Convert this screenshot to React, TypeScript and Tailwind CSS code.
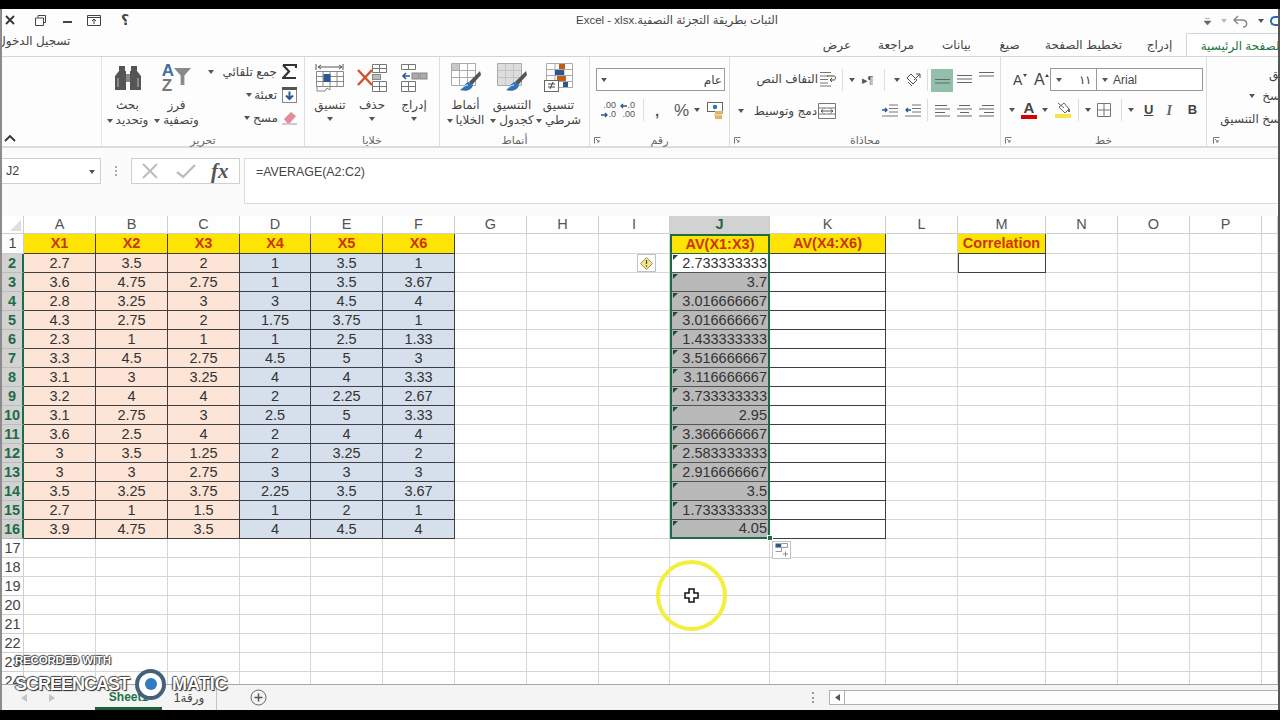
import type { ReactNode } from "react";

const AR = "font-['Liberation_Sans','DejaVu_Sans',sans-serif]";

const A = ["2.7","3.6","2.8","4.3","2.3","3.3","3.1","3.2","3.1","3.6","3","3","3.5","2.7","3.9"];
const B = ["3.5","4.75","3.25","2.75","1","4.5","3","4","2.75","2.5","3.5","3","3.25","1","4.75"];
const C = ["2","2.75","3","2","1","2.75","3.25","4","3","4","1.25","2.75","3.75","1.5","3.5"];
const D = ["1","1","3","1.75","1","4.5","4","2","2.5","2","2","3","2.25","1","4"];
const E = ["3.5","3.5","4.5","3.75","2.5","5","4","2.25","5","4","3.25","3","3.5","2","4.5"];
const F = ["1","3.67","4","1","1.33","3","3.33","2.67","3.33","4","2","3","3.67","1","4"];
const J = ["2.733333333","3.7","3.016666667","3.016666667","1.433333333","3.516666667","3.116666667","3.733333333","2.95","3.366666667","2.583333333","2.916666667","3.5","1.733333333","4.05"];
const LETTERS = ["A","B","C","D","E","F","G","H","I","J","K","L","M","N","O","P",""];
const ROWS = Array.from({ length: 24 }, (_, i) => i + 1);

function Caret({ className = "" }: { className?: string }) {
  return (
    <svg width="6" height="4" viewBox="0 0 6 4" className={"shrink-0 " + className}>
      <path d="M0 0h6L3 4z" fill="#555" />
    </svg>
  );
}

function Launcher({ className = "" }: { className?: string }) {
  return (
    <svg width="7" height="7" viewBox="0 0 7 7" className={className}>
      <path d="M.5 6.5v-6h6M2 2l3 3M5 3v2H3" fill="none" stroke="#777" />
    </svg>
  );
}

function Sep({ className = "" }: { className?: string }) {
  return <div className={"h-[22px] w-px shrink-0 bg-[#dcdcdc] " + className} />;
}

// big ribbon button: icon on top, two lines of label, caret somewhere
function Big({ w, icon, top, bottom, caretLine }: { w: string; icon: ReactNode; top: string; bottom?: string; caretLine?: boolean }) {
  return (
    <div className={"flex shrink-0 flex-col items-center text-[12px] leading-[15px] text-[#444] " + w}>
      <div className="flex h-[33px] items-center justify-center">{icon}</div>
      <div className="mt-[4px] whitespace-nowrap" dir="rtl">{top}</div>
      {caretLine ? (
        <div className="flex h-[15px] items-center whitespace-nowrap">
          <Caret className="mr-[3px]" />
          <span dir="rtl">{bottom}</span>
        </div>
      ) : (
        <div className="mt-[4px]"><Caret /></div>
      )}
    </div>
  );
}

function Group({ w, label, launcher, children }: { w: string; label: string; launcher?: boolean; children: ReactNode }) {
  return (
    <div className={"flex h-[90px] shrink-0 flex-col overflow-hidden border-r border-[#dedede] " + w}>
      <div className="flex h-[76px] pt-[4px]">{children}</div>
      <div className="flex h-[14px] items-center text-[11px] text-[#666]">
        {launcher && <Launcher className="ml-[4px]" />}
        <span className="flex-1 text-center" dir="rtl">{label}</span>
        {launcher && <span className="w-[11px]" />}
      </div>
    </div>
  );
}

function Binoculars() {
  return (
    <svg width="28" height="26" viewBox="0 0 28 26">
      <path d="M5 1h6v5h1v19H1V11l4-5zM23 1h-6v5h-1v19h11V11l-4-5z" fill="#555" />
      <rect x="12" y="9" width="4" height="8" fill="#888" />
      <rect x="3" y="13" width="2" height="9" fill="#888" />
      <rect x="23" y="13" width="2" height="9" fill="#888" />
    </svg>
  );
}

function SortIcon() {
  return (
    <div className="flex h-[30px] items-start font-['Liberation_Sans',sans-serif] text-[17px] font-bold leading-[15px]">
      <div className="flex flex-col">
        <span className="text-[#41719c]">A</span>
        <span className="text-[#777]">Z</span>
      </div>
      <svg width="17" height="17" viewBox="0 0 18 18" className="mt-[5px]">
        <path d="M0 0h18l-7 8v10h-4V8z" fill="#8a8a8a" />
      </svg>
    </div>
  );
}

function Sigma() {
  return (
    <svg width="15" height="15" viewBox="0 0 15 15">
      <path d="M1 1h13v3M14 14H1l6-6.5L1 1" fill="none" stroke="#333" strokeWidth="2.2" />
    </svg>
  );
}

function FillIcon() {
  return (
    <svg width="15" height="16" viewBox="0 0 15 16">
      <rect x=".5" y=".5" width="14" height="15" fill="#fff" stroke="#888" />
      <rect width="15" height="3" fill="#555" />
      <path d="M7.5 4.5v7M4 8.5l3.5 3.5L11 8.5" fill="none" stroke="#2b5797" strokeWidth="2" />
    </svg>
  );
}

function Eraser() {
  return (
    <svg width="15" height="14" viewBox="0 0 15 14">
      <path d="M2 8l7-7 5 4-6 7H5z" fill="#e58b98" />
      <path d="M0 13h15" stroke="#999" />
    </svg>
  );
}

function FormatIcon() {
  return (
    <svg width="30" height="31" viewBox="0 0 30 31">
      <path d="M1 2v6M28 2v6M3 5h24M3 5l3-2M3 5l3 2M27 5l-3-2M27 5l-3 2" fill="none" stroke="#555" />
      <path d="M1.5 9.5h27v15h-27zM8 9.5v15M15 9.5v15M22 9.5v15M1.5 14.5h27M1.5 19.5h27" fill="#fff" stroke="#888" />
      <rect x="8.5" y="12" width="7" height="8" fill="#2b5797" />
      <path d="M2 25v4h8l2-3 3 2M15 25v3" fill="none" stroke="#888" />
    </svg>
  );
}

function DeleteIcon() {
  return (
    <svg width="30" height="30" viewBox="0 0 30 30">
      <path d="M15.5 1.5h14v8h-14zM22.5 1.5v8M15.5 5.5h14" fill="#fff" stroke="#777" />
      <rect x="15.5" y="11.5" width="8" height="5" fill="#bbb" stroke="#888" />
      <path d="M15.5 18.5h14v10h-14zM22.5 18.5v10M15.5 23.5h14" fill="#fff" stroke="#777" />
      <path d="M1 7l14 15M15 7L1 22" stroke="#d2532a" strokeWidth="2.4" />
    </svg>
  );
}

function InsertIcon() {
  return (
    <svg width="27" height="30" viewBox="0 0 27 30">
      <path d="M.5 1.5h14v5H.5zM7.5 1.5v5M.5 18.5h14v10H.5zM7.5 18.5v10M.5 23.5h14" fill="#fff" stroke="#777" />
      <rect x="11" y="10" width="7" height="6" fill="#aaa" stroke="#888" />
      <rect x="19" y="10" width="7" height="6" fill="#aaa" stroke="#888" />
      <path d="M9 13H2M5 10l-3 3 3 3" fill="none" stroke="#2b5797" strokeWidth="1.6" />
    </svg>
  );
}

function CondIcon() {
  return (
    <svg width="30" height="31" viewBox="0 0 30 31">
      <path d="M2.5 1.5h26v24h-26zM11 1.5v24M20 1.5v24M2.5 7.5h26M2.5 13.5h26M2.5 19.5h26" fill="#fff" stroke="#aaa" />
      <rect x="15" y="2" width="6" height="5" fill="#c55a11" />
      <rect x="11" y="8" width="9" height="5" fill="#2b5797" />
      <rect x="13" y="14" width="9" height="5" fill="#c55a11" />
      <rect x="19" y="20" width="5" height="5" fill="#2b5797" />
      <rect x=".5" y="18.5" width="14" height="11" fill="#fff" stroke="#666" />
      <path d="M4 22h7M4 25h7M9 20l-3 7" stroke="#444" fill="none" />
    </svg>
  );
}

function BrushTable({ cells }: { cells: ReactNode }) {
  return (
    <svg width="30" height="31" viewBox="0 0 30 31">
      <path d="M.5 1.5h24v22H.5zM8.5 1.5v22M16.5 1.5v22M.5 8.5h24M.5 15.5h24" fill="#fff" stroke="#aaa" />
      {cells}
      <path d="M29 9l-11 11 3 3 9-10z" fill="#555" />
      <path d="M18 20c-5 1-4 5-9 8 6 2 12 0 13-5z" fill="#2e75b6" />
      <path d="M12 25c2-1 3-2 5-2" stroke="#fff" fill="none" />
    </svg>
  );
}

function WrapIcon() {
  return (
    <svg width="17" height="16" viewBox="0 0 17 16">
      <path d="M1 1.5h11M1 5h8M1 8.5h8M1 12h8M1 15h11" stroke="#777" fill="none" />
      <path d="M8 5h7c2 0 2 4 0 4h-4M13 7l-2 2 2 2" stroke="#444" fill="none" />
    </svg>
  );
}

function MergeIcon() {
  return (
    <svg width="18" height="16" viewBox="0 0 18 16">
      <path d="M.5.5h17v15H.5zM.5 5h17M.5 11h17M6 5v1M12 5v1M6 10v1M12 10v1" fill="#fff" stroke="#777" />
      <path d="M3 8h12M5 6.5L3 8l2 1.5M13 6.5L15 8l-2 1.5" stroke="#555" fill="none" />
    </svg>
  );
}

function Lines({ kind }: { kind: "r" | "c" | "l" }) {
  const d = kind === "r"
    ? "M3 2.5h12M0 6h15M5 9.5h10M0 13h15"
    : kind === "c"
      ? "M2 2.5h11M0 6h15M3 9.5h9M0 13h15"
      : "M0 2.5h12M0 6h15M0 9.5h10M0 13h15";
  return (
    <svg width="15" height="15" viewBox="0 0 15 15">
      <path d={d} stroke="#666" fill="none" />
    </svg>
  );
}

function VLines({ n }: { n: number }) {
  return (
    <svg width="15" height="12" viewBox="0 0 15 12">
      {Array.from({ length: n }, (_, i) => (
        <path key={i} d={`M0 ${i * 3.5 + 1.5}h15`} stroke="#666" />
      ))}
    </svg>
  );
}

function Indent({ flip }: { flip?: boolean }) {
  return (
    <svg width="16" height="13" viewBox="0 0 16 13">
      <path d="M7 1h9M7 4.5h9M7 8h9M0 12h16" stroke="#777" fill="none" />
      <path d={flip ? "M6 6H1M3 4L1 6l2 2" : "M0 6h5M3 4l2 2-2 2"} stroke="#2b5797" strokeWidth="1.4" fill="none" />
    </svg>
  );
}

function Accounting() {
  return (
    <svg width="17" height="17" viewBox="0 0 17 17">
      <rect x=".5" y=".5" width="15" height="9" fill="#fff" stroke="#666" />
      <circle cx="8" cy="5" r="2.2" fill="#2e75b6" />
      <rect x="8" y="9" width="8" height="3" fill="#e3b26a" />
      <rect x="7" y="12" width="8" height="2" fill="#eecb98" />
      <rect x="8" y="14" width="7" height="3" fill="#e3b26a" />
    </svg>
  );
}

function Arrow({ left }: { left?: boolean }) {
  return (
    <svg width="7" height="6" viewBox="0 0 7 6" className="shrink-0">
      <path d={left ? "M7 3H1M3 1L1 3l2 2" : "M0 3h6M4 1l2 2-2 2"} stroke="#2b5797" strokeWidth="1.3" fill="none" />
    </svg>
  );
}

function Decimals({ grow }: { grow?: boolean }) {
  return (
    <div className="flex h-[18px] w-[15px] shrink-0 flex-col items-end font-['Liberation_Sans',sans-serif] text-[9px] leading-[9px] text-[#555]">
      {grow ? (
        <>
          <span>.00</span>
          <span className="flex items-center"><Arrow />.0</span>
        </>
      ) : (
        <>
          <span className="flex items-center"><Arrow left />.0</span>
          <span>.00</span>
        </>
      )}
    </div>
  );
}

function SmallCaret({ up }: { up?: boolean }) {
  return (
    <svg width="4" height="3" viewBox="0 0 4 3" className="mb-[9px] shrink-0">
      <path d={up ? "M0 3h4L2 0z" : "M0 0h4L2 3z"} fill="#444" />
    </svg>
  );
}

function Ribbon() {
  return (
    <div className="flex h-[91px] shrink-0 border-b-2 border-[#dcdcdc] bg-[#fdfdfd]">
      <div className="flex w-[100px] shrink-0 flex-col justify-end border-r border-[#e4e4e4] pb-[4px] pl-[2px]">
        <svg width="12" height="7" viewBox="0 0 12 7"><path d="M1 6l5-5 5 5" fill="none" stroke="#333" strokeWidth="1.8" /></svg>
      </div>

      <Group w="w-[203px]" label="تحرير">
        <Big w="w-[51px]" icon={<Binoculars />} top="بحث" bottom="وتحديد" caretLine />
        <Big w="w-[47px]" icon={<SortIcon />} top="فرز" bottom="وتصفية" caretLine />
        <div className="flex flex-1 flex-col pr-[7px] text-[12px] text-[#444]">
          <div className="flex h-[21px] items-center justify-end">
            <Caret className="mr-[9px]" />
            <span dir="rtl" className="mr-[5px]">جمع تلقائي</span>
            <Sigma />
          </div>
          <div className="mt-[2px] flex h-[21px] items-center justify-end">
            <Caret className="mr-[2px]" />
            <span dir="rtl" className="mr-[5px]">تعبئة</span>
            <FillIcon />
          </div>
          <div className="mt-[2px] flex h-[21px] items-center justify-end">
            <Caret className="mr-[3px]" />
            <span dir="rtl" className="mr-[4px]">مسح</span>
            <Eraser />
          </div>
        </div>
      </Group>

      <Group w="w-[135px]" label="خلايا">
        <div className="w-[4px]" />
        <Big w="w-[42px]" icon={<FormatIcon />} top="تنسيق" />
        <Big w="w-[42px]" icon={<DeleteIcon />} top="حذف" />
        <Big w="w-[42px]" icon={<InsertIcon />} top="إدراج" />
      </Group>

      <Group w="w-[150px]" label="أنماط">
        <div className="w-[2px]" />
        <Big w="w-[47px]" icon={<BrushTable cells={<rect x="1" y="2" width="7" height="6" fill="#c9c9c9" />} />} top="أنماط" bottom="الخلايا" caretLine />
        <Big w="w-[46px]" icon={<BrushTable cells={<rect x="1" y="2" width="23" height="21" fill="#cfcfcf" opacity=".7" />} />} top="التنسيق" bottom="كجدول" caretLine />
        <Big w="w-[47px]" icon={<CondIcon />} top="تنسيق" bottom="شرطي" caretLine />
      </Group>

      <Group w="w-[140px]" label="رقم" launcher>
        <div className="flex w-full flex-col pl-[6px] pr-[4px] pt-[7px]">
          <div className="flex h-[23px] items-center justify-between border border-[#9a9a9a] bg-white pl-[4px] pr-[2px] text-[12px] text-[#444]">
            <Caret />
            <span dir="rtl">عام</span>
          </div>
          <div className="mt-[7px] flex h-[24px] items-center text-[#555]">
            <div className="ml-[5px]"><Decimals grow /></div>
            <div className="ml-[4px]"><Decimals /></div>
            <Sep className="ml-[8px]" />
            <span className="ml-[11px] w-[4px] font-['Liberation_Sans',sans-serif] text-[15px] font-bold leading-none">,</span>
            <span className="ml-[15px] w-[15px] font-['Liberation_Sans',sans-serif] text-[17px] leading-none">%</span>
            <Caret className="ml-[5px]" />
            <div className="ml-[7px]"><Accounting /></div>
          </div>
        </div>
      </Group>

      <Group w="w-[271px]" label="محاذاة" launcher>
        <div className="flex w-full pt-[7px] text-[12px] text-[#444]">
          <div className="flex w-[106px] flex-col pl-[8px]">
            <div className="flex h-[22px] items-center justify-end">
              <span dir="rtl" className="mr-[1px]">التفاف النص</span>
              <WrapIcon />
            </div>
            <div className="mt-[10px] flex h-[22px] items-center">
              <Caret />
              <span dir="rtl" className="ml-[8px] mr-[1px] flex-1 text-right">دمج وتوسيط</span>
              <MergeIcon />
            </div>
          </div>
          <div className="flex flex-1 flex-col">
            <div className="flex h-[24px] items-center">
              <Sep className="ml-[6px]" />
              <Caret className="ml-[6px]" />
              <span className="ml-[7px] w-[14px] whitespace-nowrap text-[11px] leading-none text-[#555]">▸¶</span>
              <Sep className="ml-[8px]" />
              <Caret className="ml-[9px]" />
              <svg width="16" height="16" viewBox="0 0 16 16" className="ml-[5px] shrink-0">
                <path d="M2 6l4-4 6 6-4 4zM3 10l4 4M11 2h4v4M15 2L9 8" fill="none" stroke="#555" />
              </svg>
              <Sep className="ml-[6px]" />
              <div className="ml-[3px] flex h-[23px] w-[22px] items-end justify-center bg-[#92bfa9] pb-[2px]"><VLines n={2} /></div>
              <div className="ml-[4px]"><VLines n={3} /></div>
              <div className="mb-[6px] ml-[7px]"><VLines n={2} /></div>
            </div>
            <div className="mt-[6px] flex h-[24px] items-center">
              <div className="ml-[46px]"><Indent /></div>
              <div className="ml-[7px]"><Indent flip /></div>
              <Sep className="ml-[6px]" />
              <div className="ml-[7px]"><Lines kind="l" /></div>
              <div className="ml-[7px]"><Lines kind="c" /></div>
              <div className="ml-[7px]"><Lines kind="r" /></div>
            </div>
          </div>
        </div>
      </Group>

      <Group w="w-[206px]" label="خط" launcher>
        <div className="flex w-full flex-col pt-[7px] font-['Liberation_Sans',sans-serif] text-[#444]">
          <div className="flex h-[23px] items-center">
            <span className="ml-[12px] w-[10px] text-[14px] leading-none">A</span>
            <SmallCaret />
            <span className="ml-[7px] w-[11px] text-[16px] leading-none">A</span>
            <SmallCaret up />
            <div className="ml-[1px] flex h-[23px] w-[47px] items-center justify-between border border-[#9a9a9a] bg-white px-[5px] text-[12px]">
              <Caret />
              <span>١١</span>
            </div>
            <div className="flex h-[23px] w-[106px] items-center border border-l-0 border-[#9a9a9a] bg-white pl-[5px] text-[12px]">
              <Caret />
              <span className="ml-[5px]">Arial</span>
            </div>
          </div>
          <div className="mt-[7px] flex h-[24px] items-center">
            <Caret className="ml-[8px]" />
            <div className="ml-[6px] flex w-[16px] flex-col items-center">
              <span className="text-[15px] font-bold leading-[14px]">A</span>
              <span className="h-[4px] w-[16px] bg-[#d90000]" />
            </div>
            <Caret className="ml-[5px]" />
            <div className="ml-[7px] flex w-[16px] flex-col items-center">
              <svg width="13" height="12" viewBox="0 0 13 12"><path d="M2 5l5-4 5 6-4 4zM1 1l6 5" fill="none" stroke="#666" /><path d="M12 7v3" stroke="#666" strokeWidth="2" /></svg>
              <span className="h-[4px] w-[16px] bg-[#f5e642]" />
            </div>
            <Sep className="ml-[7px]" />
            <Caret className="ml-[6px]" />
            <svg width="14" height="14" viewBox="0 0 14 14" className="ml-[6px]"><path d="M.5.5h13v13H.5zM7 .5v13M.5 7h13" fill="none" stroke="#777" /></svg>
            <Sep className="ml-[10px]" />
            <Caret className="ml-[6px]" />
            <span className="ml-[10px] text-[13px] font-bold underline">U</span>
            <span className="ml-[13px] font-['Liberation_Serif',serif] text-[14px] font-bold italic text-[#666]">I</span>
            <span className="ml-[16px] text-[13px] font-bold">B</span>
          </div>
        </div>
      </Group>

      <div className="flex h-[90px] flex-1 flex-col overflow-hidden text-[12px] text-[#444]">
        <div className="flex h-[76px] flex-col items-end pt-[8px]">
          <span dir="rtl" className="mr-[-15px] h-[20px] whitespace-nowrap">لصق</span>
          <div className="flex h-[22px] items-center">
            <Caret className="mr-[7px]" />
            <span dir="rtl" className="mr-[-6px] whitespace-nowrap">نسخ</span>
          </div>
          <span dir="rtl" className="mr-[-6px] mt-[3px] whitespace-nowrap">نسخ التنسيق</span>
        </div>
        <div className="flex h-[14px] items-center"><Launcher className="ml-[6px]" /></div>
      </div>
    </div>
  );
}

function TitleBar() {
  return (
    <div className="flex h-[24px] shrink-0 items-center bg-[#fdfdfd] text-[#444]">
      <div className="flex w-[574px] shrink-0 -translate-y-[1px] items-center">
        <svg width="10" height="10" viewBox="0 0 10 10" className="ml-[3px]"><path d="M1 1l8 8M9 1L1 9" stroke="#333" strokeWidth="1.8" /></svg>
        <svg width="11" height="11" viewBox="0 0 11 11" className="ml-[20px]"><path d="M3 2.5V.5h7.5v7H8.5M.5 3h8v7.5h-8z" fill="none" stroke="#444" /></svg>
        <div className="ml-[17px] h-[2px] w-[9px] translate-y-[2px] bg-[#444]" />
        <svg width="14" height="11" viewBox="0 0 14 11" className="ml-[15px]"><path d="M.5.5h13v10H.5zM.5 2.5h13M7 9V4M5 6l2-2 2 2" fill="none" stroke="#444" /></svg>
        <span className="ml-[20px] text-[14px] font-bold leading-none">؟</span>
      </div>
      <div dir="ltr" className="w-[206px] shrink-0 whitespace-nowrap text-[11.5px]">Excel - xlsx.الثبات بطريقة التجزئة النصفية</div>
      <div className="flex flex-1 items-center justify-end overflow-hidden">
        <svg width="7" height="7" viewBox="0 0 7 7"><path d="M1 .5h5M0 3h7L3.5 7z" fill="#666" stroke="#666" strokeWidth=".5" /></svg>
        <Caret className="ml-[10px] opacity-40" />
        <svg width="15" height="13" viewBox="0 0 15 13" className="ml-[6px]"><path d="M5 1L1 5l4 4M1 5h8c6 0 6 7 1 7" fill="none" stroke="#888" strokeWidth="1.5" /></svg>
        <Caret className="ml-[10px]" />
        <div className="ml-[6px] h-[10px] w-[8px] shrink-0 rounded-l-full border-[2px] border-r-0 border-[#2b6cb0]" />
      </div>
    </div>
  );
}

function Tabs() {
  const tabs: [string, string][] = [
    ["عرض", "w-[54px]"],
    ["مراجعة", "w-[64px]"],
    ["بيانات", "w-[57px]"],
    ["صيغ", "w-[49px]"],
    ["تخطيط الصفحة", "w-[99px]"],
    ["إدراج", "w-[53px]"],
  ];
  return (
    <div className="flex h-[24px] shrink-0 items-end overflow-hidden border-b border-[#d4d4d4] bg-[#fdfdfd] text-[12px] text-[#444]">
      <div className="flex h-[23px] w-[808px] shrink-0 items-start overflow-hidden">
        <span dir="rtl" className="-mt-[1px] ml-[-5px] whitespace-nowrap">تسجيل الدخول</span>
      </div>
      {tabs.map(([t, w]) => (
        <div key={t} dir="rtl" className={"flex h-[23px] shrink-0 items-center justify-center whitespace-nowrap " + w}>{t}</div>
      ))}
      <div className="mb-[-1px] flex h-[24px] flex-1 items-center justify-end overflow-hidden border-l border-t border-[#d4d4d4] bg-white text-[#217346]">
        <span dir="rtl" className="mr-[-5px] whitespace-nowrap">الصفحة الرئيسية</span>
      </div>
    </div>
  );
}

function FormulaBar() {
  return (
    <div className="flex h-[68px] shrink-0 items-start bg-[#fbfbfb] pt-[10px]">
      <div className="flex h-[26px] w-[99px] shrink-0 items-center justify-between border border-l-0 border-[#cfcfcf] bg-white pl-[4px] pr-[5px] pt-[1px] font-['Liberation_Sans',sans-serif] text-[12.5px] text-[#444]">
        <span>J2</span>
        <Caret />
      </div>
      <div className="ml-[14px] mt-[8px] flex h-[10px] w-[2px] flex-col justify-between">
        <span className="h-[2px] w-[2px] bg-[#aaa]" />
        <span className="h-[2px] w-[2px] bg-[#aaa]" />
        <span className="h-[2px] w-[2px] bg-[#aaa]" />
      </div>
      <div className="ml-[14px] flex h-[26px] w-[109px] shrink-0 items-center border border-[#cfcfcf] bg-white pl-[9px]">
        <svg width="18" height="18" viewBox="0 0 18 18"><path d="M2 2l14 14M16 2L2 16" stroke="#bdbdbd" strokeWidth="2" /></svg>
        <svg width="20" height="16" viewBox="0 0 20 16" className="ml-[17px]"><path d="M1 9l6 5L19 2" fill="none" stroke="#bdbdbd" strokeWidth="2.4" /></svg>
        <span className="ml-[15px] font-['Liberation_Serif',serif] text-[21px] font-bold italic leading-none text-[#555]">fx</span>
      </div>
      <div className="ml-[4px] h-[46px] flex-1 border-y border-l border-[#dcdcdc] bg-white pl-[11px] pt-[4px] font-['Liberation_Sans',sans-serif] text-[12.4px] text-[#444]">=AVERAGE(A2:C2)</div>
    </div>
  );
}

function Triangle() {
  return (
    <svg width="5" height="5" viewBox="0 0 5 5" className="absolute left-[1px] top-[1px]">
      <path d="M0 0h5L0 5z" fill="#1e4d36" />
    </svg>
  );
}

function cellFor(col: string, row: number): ReactNode {
  const base = "relative flex items-center justify-center whitespace-nowrap ";
  const plain = "border-b border-r border-[#d6d6d6] ";
  const inked = "border-b border-r border-[#3f3f3f] ";
  const i = row - 2;
  const data: Record<string, string[]> = { A, B, C, D, E, F };

  if (row === 1) {
    const heads: Record<string, string> = { A: "X1", B: "X2", C: "X3", D: "X4", E: "X5", F: "X6", J: "AV(X1:X3)", K: "AV(X4:X6)", M: "Correlation" };
    if (heads[col]) {
      const green = col === "J" ? "border-x-2 border-t-2 border-b border-[#1f6b45] " : inked;
      return <div className={base + green + "bg-[#fde404] font-bold text-[#cc3300]"}>{heads[col]}</div>;
    }
  } else if (data[col] && row <= 16) {
    const bg = "ABC".includes(col) ? "bg-[#fce4d6]" : "bg-[#d6dfec]";
    return <div className={base + inked + bg + " text-[#333]"}>{data[col][i]}</div>;
  } else if (col === "J" && row <= 16) {
    const last = row === 16;
    return (
      <div className={"relative flex items-center justify-end whitespace-nowrap border-x-2 border-[#1f6b45] pr-[1px] text-[#333] " + (row === 2 ? "bg-white " : "bg-[#b9b9b9] ") + (last ? "border-b-2" : "border-b border-b-[#555]")}>
        <Triangle />
        {J[i]}
        {last && <span className="absolute bottom-[-4px] right-[-5px] z-10 h-[6px] w-[6px] border border-white bg-[#1f6b45]" />}
      </div>
    );
  } else if (col === "K" && row <= 16) {
    return <div className={base + inked} />;
  } else if (col === "M" && row === 2) {
    return <div className={base + inked + "border-l"} />;
  }

  if (col === "I" && row === 2) {
    return (
      <div className={base + plain}>
        <div className="absolute left-[38px] top-0 z-10 flex h-[18px] w-[19px] items-center justify-center border border-[#c4c4c4] bg-white">
          <svg width="13" height="13" viewBox="0 0 13 13">
            <path d="M6.5.5l6 6-6 6-6-6z" fill="#f3e58e" stroke="#a2914a" />
            <path d="M6.5 3v4M6.5 8.2v1.5" stroke="#444" strokeWidth="1.2" />
          </svg>
        </div>
      </div>
    );
  }
  if (col === "K" && row === 17) {
    return (
      <div className={base + plain}>
        <div className="absolute left-[2px] top-[2px] z-10 flex h-[18px] w-[19px] items-center justify-center border border-[#c4c4c4] bg-white">
          <svg width="14" height="14" viewBox="0 0 14 14">
            <rect x=".5" y=".5" width="6" height="4" fill="#2b5797" />
            <path d="M6.5.5h6v4h-6M.5 4.5h6v4h-6" fill="#fff" stroke="#999" />
            <path d="M8 11h5M10.5 8.5v5" stroke="#888" />
          </svg>
        </div>
      </div>
    );
  }
  return <div className={base + plain} />;
}

function Sheet() {
  return (
    <div className="grid h-[468px] shrink-0 auto-rows-[19px] grid-cols-[22px_72px_72px_72px_71px_72px_72px_72px_72px_71px_100px_116px_72px_88px_72px_72px_72px_1fr] grid-rows-[18px_20px] overflow-hidden bg-[#fefefe] font-['Liberation_Sans',sans-serif] text-[14.5px] leading-none">
      <div className="flex items-end justify-end border-b border-r border-[#cfcfcf] pb-[2px] pr-[2px]">
        <svg width="11" height="11" viewBox="0 0 11 11"><path d="M11 0v11H0z" fill="#dedede" /></svg>
      </div>
      {LETTERS.map((l, idx) => (
        <div
          key={idx}
          className={"flex items-center justify-center border-b border-r border-[#cfcfcf] " + (l === "J" ? "bg-[#d2d2d2] font-bold text-[#1f6b45]" : "text-[#555]")}
        >
          {l}
        </div>
      ))}
      {ROWS.map((r) => (
        <div key={r} className="contents">
          <div
            className={
              "flex items-center justify-center " +
              (r >= 2 && r <= 16
                ? "border-b border-r-2 border-b-[#bbb] border-r-[#1f6b45] bg-[#d2d2d2] font-bold text-[#1f6b45]"
                : "border-b border-r border-[#cfcfcf] bg-[#fdfdfd] text-[#444]")
            }
          >
            {r}
          </div>
          {LETTERS.map((l, idx) => (
            <div key={idx} className="contents">{cellFor(l || "Q", r)}</div>
          ))}
        </div>
      ))}
    </div>
  );
}

function SheetTabs() {
  return (
    <div className="flex h-[26px] shrink-0 items-center border-t border-[#a8a8a8] bg-[#f4f4f4] text-[12px]">
      <div className="flex w-[93px] shrink-0 items-center pl-[19px]">
        <svg width="6" height="8" viewBox="0 0 6 8"><path d="M6 0v8L0 4z" fill="#c4c4c4" /></svg>
        <svg width="6" height="8" viewBox="0 0 6 8" className="ml-[22px]"><path d="M0 0v8l6-4z" fill="#c4c4c4" /></svg>
      </div>
      <div className="flex h-[25px] w-[67px] shrink-0 items-center justify-center border-b-[3px] border-[#1f5c3e] pt-[1px] font-['Liberation_Sans',sans-serif] font-bold text-[#217346]">Sheet1</div>
      <div dir="rtl" className="flex h-[25px] w-[55px] shrink-0 items-center justify-center border-r border-[#c4c4c4] text-[#444]">ورقة1</div>
      <svg width="17" height="17" viewBox="0 0 17 17" className="ml-[33px]"><circle cx="8.5" cy="8.5" r="7.5" fill="none" stroke="#666" /><path d="M8.5 4.5v8M4.5 8.5h8" stroke="#555" strokeWidth="1.5" /></svg>
      <div className="ml-[545px] flex h-[11px] w-[2px] flex-col justify-between">
        <span className="h-[2px] w-[2px] bg-[#999]" />
        <span className="h-[2px] w-[2px] bg-[#999]" />
        <span className="h-[2px] w-[2px] bg-[#999]" />
      </div>
      <div className="ml-[15px] flex h-[15px] flex-1 border-y border-l border-[#b0b0b0] bg-[#fdfdfd]">
        <div className="flex w-[15px] items-center justify-center border-r border-[#b0b0b0] bg-white">
          <svg width="5" height="7" viewBox="0 0 5 7"><path d="M5 0v7L0 3.5z" fill="#555" /></svg>
        </div>
      </div>
    </div>
  );
}

export default function App() {
  return (
    <div className={"relative flex h-[720px] w-[1280px] flex-col overflow-hidden bg-black pb-[10px] pt-[9px] " + AR}>
      <div className="flex h-[701px] flex-col border-l-2 border-r-2 border-l-[#8c8c8c] border-r-[#555]">
        <TitleBar />
        <Tabs />
        <Ribbon />
        <FormulaBar />
        <Sheet />
        <SheetTabs />
      </div>

      {/* cursor highlight from the recorder */}
      <div className="absolute left-[656px] top-[560px] flex h-[71px] w-[71px] items-center justify-center rounded-full border-[4px] border-[#f4ee3c]">
        <svg width="15" height="15" viewBox="0 0 15 15">
          <path d="M5 1h5v4h4v5h-4v4H5v-4H1V5h4z" fill="#fff" stroke="#111" strokeWidth="1.5" />
        </svg>
      </div>

      {/* recorder watermark */}
      <div className="absolute left-[15px] top-[655px] font-['Liberation_Sans',sans-serif] font-bold leading-none text-white [text-shadow:1px_1px_1px_#222,-1px_0_1px_#444,0_-1px_1px_#444]">
        <div className="text-[11.5px] tracking-[-0.2px]">RECORDED WITH</div>
        <div className="mt-[2px] flex items-center text-[18px] tracking-[-1px]">
          <span>SCREENCAST</span>
          <div className="ml-[6px] flex h-[31px] w-[31px] items-center justify-center rounded-full border-[4px] border-[#45617a] bg-white">
            <div className="h-[12px] w-[12px] rounded-full bg-[#2f7cc4]" />
          </div>
          <span className="ml-[6px] tracking-[0px]">MATIC</span>
        </div>
      </div>
    </div>
  );
}
